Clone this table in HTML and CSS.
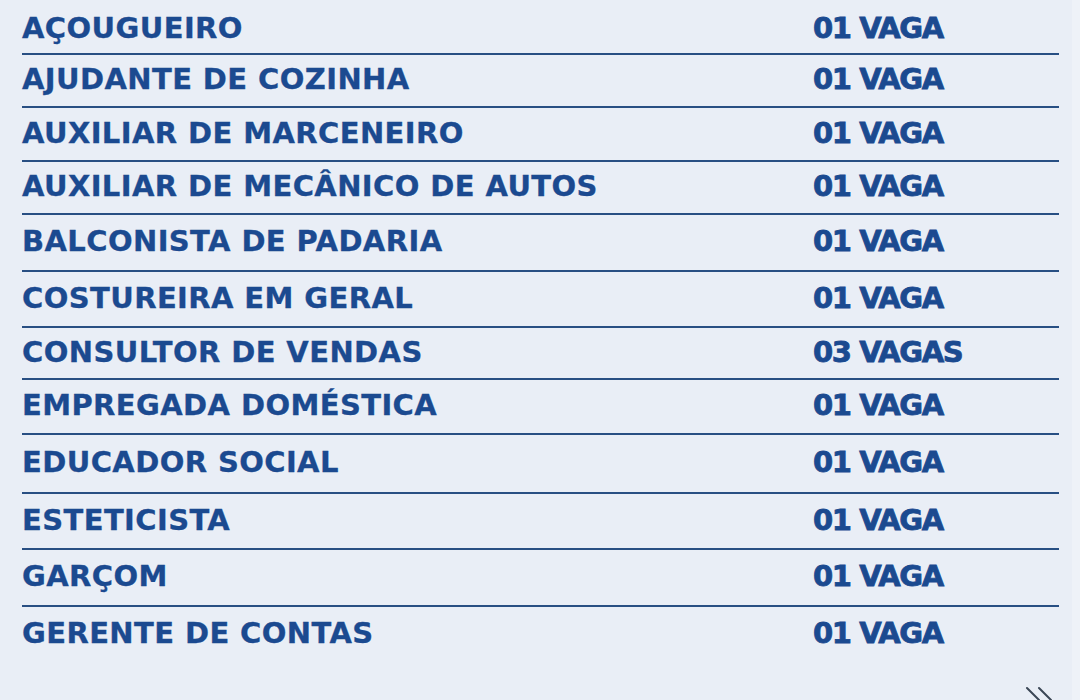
FILE: index.html
```html
<!DOCTYPE html>
<html lang="pt-BR">
<head>
<meta charset="utf-8">
<title>Vagas</title>
<link rel="stylesheet" href="styles.css">
</head>
<body>
<div class="page">
  <ul class="jobs">
    <li class="job"><span class="role">AÇOUGUEIRO</span><span class="count">01 VAGA</span></li>
    <li class="job"><span class="role">AJUDANTE DE COZINHA</span><span class="count">01 VAGA</span></li>
    <li class="job"><span class="role">AUXILIAR DE MARCENEIRO</span><span class="count">01 VAGA</span></li>
    <li class="job"><span class="role">AUXILIAR DE MECÂNICO DE AUTOS</span><span class="count">01 VAGA</span></li>
    <li class="job"><span class="role">BALCONISTA DE PADARIA</span><span class="count">01 VAGA</span></li>
    <li class="job"><span class="role">COSTUREIRA EM GERAL</span><span class="count">01 VAGA</span></li>
    <li class="job"><span class="role">CONSULTOR DE VENDAS</span><span class="count">03 VAGAS</span></li>
    <li class="job"><span class="role">EMPREGADA DOMÉSTICA</span><span class="count">01 VAGA</span></li>
    <li class="job"><span class="role">EDUCADOR SOCIAL</span><span class="count">01 VAGA</span></li>
    <li class="job"><span class="role">ESTETICISTA</span><span class="count">01 VAGA</span></li>
    <li class="job"><span class="role">GARÇOM</span><span class="count">01 VAGA</span></li>
    <li class="job"><span class="role">GERENTE DE CONTAS</span><span class="count">01 VAGA</span></li>
  </ul>
  <div class="edge"></div>
  <svg class="more" width="32" height="16" viewBox="0 0 32 16" aria-hidden="true">
    <path d="M2 2 L14 14 M14 2 L26 14" stroke="#3b4756" stroke-width="2" fill="none" stroke-linecap="round"/>
  </svg>
</div>
</body>
</html>
```
FILE: styles.css
```css
html, body {
  margin: 0;
  padding: 0;
}
body {
  background: #e9eef6;
  width: 1080px;
  height: 700px;
  overflow: hidden;
  font-family: "DejaVu Sans", "Liberation Sans", sans-serif;
}
.page {
  position: relative;
  width: 1080px;
  height: 700px;
}
.edge {
  position: absolute;
  top: 0;
  right: 0;
  width: 8px;
  height: 700px;
  background: #eef2f8;
}
.jobs {
  list-style: none;
  margin: 0;
  padding: 0 0 0 22px;
  width: 1037px;
}
.job {
  display: grid;
  grid-template-columns: 791px 1fr;
  align-items: center;
  height: 53px;
  padding-bottom: 2px;
  box-sizing: content-box;
  border-bottom: 2px solid #284f83;
  color: #1b4a90;
  font-weight: 700;
  font-size: 29px;
  line-height: 1;
  white-space: nowrap;
}
.job:nth-child(1) { height: 50px; padding-top: 3px; padding-bottom: 0; }
.job:nth-child(2) { height: 49px; }
.job:nth-child(3) { height: 50px; }
.job:nth-child(4) { height: 49px; }
.job:nth-child(5) { height: 53px; }
.job:nth-child(6) { height: 52px; }
.job:nth-child(7) { height: 48px; }
.job:nth-child(8) { height: 51px; }
.job:nth-child(9) { height: 55px; }
.job:nth-child(10) { height: 52px; }
.job:nth-child(11) { height: 53px; }
.job:nth-child(12) { height: 52px; border-bottom: none; }
.role {
  letter-spacing: 0.4px;
  -webkit-text-stroke: 0.3px #1b4a90;
}
.count {
  letter-spacing: -1.4px;
  -webkit-text-stroke: 0.8px #1b4a90;
}
.more {
  position: absolute;
  left: 1025px;
  top: 686px;
}
```
